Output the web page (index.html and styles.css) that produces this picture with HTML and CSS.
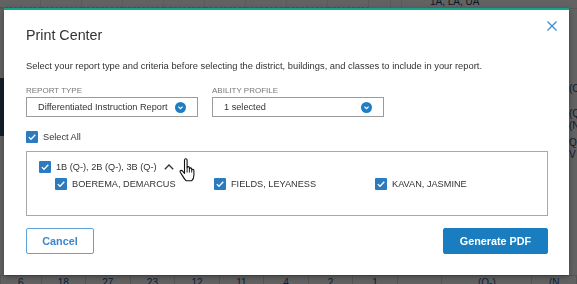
FILE: index.html
```html
<!DOCTYPE html>
<html lang="en">
<head>
    <meta charset="UTF-8">
    <meta name="viewport" content="width=device-width, initial-scale=1.0">
    <title>Print Center</title>

    <link rel="stylesheet" href="styles.css">

</head>
<body>
    <!-- page behind the dialog -->
    <div class="page">
        <div class="page-top">
            <span class="cell"></span>
            <span class="cell"></span>
            <span class="cell"></span>
            <span class="cell"></span>
            <span class="cell"></span>
            <span class="cell"></span>
            <span class="cell"></span>
            <span class="cell"></span>
            <span class="cell"></span>
            <span class="cell narrow"></span>
            <span class="cell thin"></span>
            <span class="top-note">1A, LA, UA</span>
        </div>
        <div class="page-mid">
            <div class="side-nav"></div>
            <div class="side-notes">
                <span class="n1">(C</span>
                <span class="n2">(Q</span>
                <span>(N</span>
                <span class="n4">Q</span>
                <span>V</span>
            </div>
        </div>
        <div class="page-bottom">
            <span class="num">6</span>
            <span class="num">18</span>
            <span class="num">27</span>
            <span class="num">23</span>
            <span class="num">12</span>
            <span class="num">11</span>
            <span class="num">4</span>
            <span class="num">2</span>
            <span class="num">1</span>
            <span class="num"></span>
            <span class="num wide">(Q-)</span>
            <span class="num">(N</span>
        </div>
    </div>

    <div class="overlay">
        <div class="modal">
            <button class="close" aria-label="Close">
                <svg width="10" height="10" viewBox="0 0 10 10"><path d="M0.5 0.5L9.5 9.5M9.5 0.5L0.5 9.5" stroke="#3d8fd1" stroke-width="1.3" fill="none"/></svg>
            </button>

            <h2 class="modal-title">Print Center</h2>
            <p class="intro">Select your report type and criteria before selecting the district, buildings, and classes to include in your report.</p>

            <div class="filters">
                <div class="filter">
                    <label class="filter-label">REPORT TYPE</label>
                    <div class="select">
                        <span>Differentiated Instruction Report</span>
                        <svg class="chev" width="11" height="11" viewBox="0 0 11 11"><circle cx="5.5" cy="5.5" r="5.5" fill="#1f7dc4"/><path d="M3.4 4.6L5.5 6.6L7.6 4.6" stroke="#fff" stroke-width="1.3" fill="none"/></svg>
                    </div>
                </div>
                <div class="filter">
                    <label class="filter-label">ABILITY PROFILE</label>
                    <div class="select">
                        <span>1 selected</span>
                        <svg class="chev" width="11" height="11" viewBox="0 0 11 11"><circle cx="5.5" cy="5.5" r="5.5" fill="#1f7dc4"/><path d="M3.4 4.6L5.5 6.6L7.6 4.6" stroke="#fff" stroke-width="1.3" fill="none"/></svg>
                    </div>
                </div>
            </div>

            <div class="check select-all">
                <span class="box"><svg width="12" height="12" viewBox="0 0 12 12"><path d="M2.8 6.1L5 8.3L9.3 3.7" stroke="#fff" stroke-width="1.3" fill="none"/></svg></span>
                <span>Select All</span>
            </div>

            <div class="class-list">
                <div class="check group-row">
                    <span class="box"><svg width="12" height="12" viewBox="0 0 12 12"><path d="M2.8 6.1L5 8.3L9.3 3.7" stroke="#fff" stroke-width="1.3" fill="none"/></svg></span>
                    <span>1B (Q-), 2B (Q-), 3B (Q-)</span>
                    <svg class="caret" width="10" height="6" viewBox="0 0 10 6"><path d="M0.8 5.3L5 1L9.2 5.3" stroke="#333" stroke-width="1.3" fill="none"/></svg>
                    <svg class="cursor" width="17" height="24" viewBox="0 0 17 24">
                        <path d="M5.5 2.2Q5.5 0.8 6.8 0.8Q8.1 0.8 8.1 2.2V9.6Q8.2 8.6 9.3 8.6Q10.4 8.6 10.4 9.8V10.8Q10.6 9.9 11.6 9.9Q12.7 9.9 12.7 11V12Q12.9 11.2 13.8 11.2Q14.9 11.2 14.9 12.4V17.2Q14.9 20.6 12.6 22.8H7.2Q5.6 21.4 3.4 17.6L1.3 14.2Q0.7 13 1.7 12.5Q2.7 12 3.6 13.2L5.5 15.4Z" fill="#fff" stroke="#111" stroke-width="1.1" stroke-linejoin="round"/>
                        <path d="M10.4 10.8V14.6M12.7 12V14.6M8.1 9.6V14.6" stroke="#111" stroke-width="0.9" fill="none"/>
                    </svg>
                </div>
                <div class="students">
                    <div class="check">
                        <span class="box"><svg width="12" height="12" viewBox="0 0 12 12"><path d="M2.8 6.1L5 8.3L9.3 3.7" stroke="#fff" stroke-width="1.3" fill="none"/></svg></span>
                        <span>BOEREMA, DEMARCUS</span>
                    </div>
                    <div class="check">
                        <span class="box"><svg width="12" height="12" viewBox="0 0 12 12"><path d="M2.8 6.1L5 8.3L9.3 3.7" stroke="#fff" stroke-width="1.3" fill="none"/></svg></span>
                        <span>FIELDS, LEYANESS</span>
                    </div>
                    <div class="check">
                        <span class="box"><svg width="12" height="12" viewBox="0 0 12 12"><path d="M2.8 6.1L5 8.3L9.3 3.7" stroke="#fff" stroke-width="1.3" fill="none"/></svg></span>
                        <span>KAVAN, JASMINE</span>
                    </div>
                </div>
            </div>

            <div class="actions">
                <button class="btn btn-cancel">Cancel</button>
                <button class="btn btn-primary">Generate PDF</button>
            </div>
        </div>
    </div>
</body>
</html>
```

FILE: styles.css
```css
html, body {
    margin: 0;
    height: 100%;
}
body {
    font-family: "Liberation Sans", Arial, sans-serif;
    color: #333;
    background: #f4f4f4;
    overflow: hidden;
}

/* page behind */
.page {
    height: 100%;
    display: flex;
    flex-direction: column;
}
.page-top {
    height: 8px;
    display: flex;
    border-bottom: 1px solid #ddd;
}
.cell {
    width: 40px;
    border-right: 1px solid #e2e2e2;
    border-bottom: 1px dashed #cfcfcf;
}
.cell.narrow {
    width: 21px;
    border-bottom: none;
}
.cell.thin {
    width: 10px;
    border-bottom: none;
}
.top-note {
    padding-left: 28px;
    font-size: 10px;
    line-height: 4px;
    color: #243b5e;
}
.page-mid {
    flex: 1;
    display: flex;
    justify-content: space-between;
}
.side-nav {
    width: 4px;
    height: 58px;
    margin-top: 69px;
    background: #2f4a6b;
}
.side-notes {
    width: 8px;
    display: flex;
    flex-direction: column;
    font-size: 10px;
    color: #2a4a78;
    padding-top: 74px;
}
.side-notes span {
    line-height: 12px;
}
.side-notes .n2 {
    margin-top: 13px;
}
.side-notes .n4 {
    margin-top: 5px;
}
.page-bottom {
    height: 8px;
    display: flex;
    border-top: 1px solid #ccc;
}
.num {
    width: 44px;
    border-right: 1px solid #d4d4d4;
    text-align: center;
    font-size: 10px;
    line-height: 13px;
    color: #1e4f8d;
    overflow: hidden;
}
.num:first-child {
    width: 40px;
    border-left: 1px solid #d4d4d4;
}
.num.wide {
    width: 90px;
}

/* dialog */
.overlay {
    position: fixed;
    inset: 0;
    background: rgba(0, 0, 0, 0.6);
    padding: 8px 0 0 4px;
}
.modal {
    position: relative;
    box-sizing: border-box;
    width: 565px;
    background: #fff;
    border-top: 2px solid #16a38b;
    padding: 17px 21px 21px 22px;
    box-shadow: 0 2px 6px rgba(0, 0, 0, 0.35);
}
.close {
    position: absolute;
    top: 11px;
    right: 12px;
    padding: 0;
    border: none;
    background: none;
    line-height: 0;
}
.modal-title {
    margin: 0;
    font-size: 14.3px;
    line-height: 16px;
    font-weight: normal;
    color: #333;
}
.intro {
    margin: 17px 0 0;
    font-size: 9.35px;
    line-height: 12px;
}

.filters {
    display: flex;
    gap: 14px;
    margin-top: 14px;
}
.filter-label {
    display: block;
    font-size: 8px;
    line-height: 10px;
    color: #777;
}
.select {
    box-sizing: border-box;
    width: 172px;
    height: 20px;
    margin-top: 1px;
    border: 1px solid #9b9b9b;
    padding: 0 11px 0 11px;
    display: flex;
    align-items: center;
    justify-content: space-between;
    font-size: 9.2px;
}

.check {
    display: flex;
    align-items: center;
    font-size: 9.2px;
    line-height: 12px;
}
.box {
    width: 12px;
    height: 12px;
    margin-right: 5px;
    border-radius: 1px;
    background: #2b7bc0;
    line-height: 0;
    flex-shrink: 0;
}
.select-all {
    margin-top: 14px;
}

.class-list {
    margin-top: 8px;
    border: 1px solid #a8a8a8;
    padding: 9px 12px 25px;
}
.group-row {
    position: relative;
}
.caret {
    margin-left: 7px;
}
.cursor {
    position: absolute;
    left: 140px;
    top: -3px;
}
.students {
    display: grid;
    grid-template-columns: 159px 161px 1fr;
    margin: 5px 0 0 16px;
}

.actions {
    display: flex;
    justify-content: space-between;
    margin-top: 12px;
}
.btn {
    box-sizing: border-box;
    height: 26px;
    font-family: "Liberation Sans", Arial, sans-serif;
    font-size: 10.8px;
    font-weight: bold;
    border-radius: 2px;
    cursor: pointer;
}
.btn-cancel {
    width: 68px;
    border: 1px solid #5fa2d8;
    background: #fff;
    color: #3a87cc;
}
.btn-primary {
    width: 105px;
    border: 1px solid #1a7dc0;
    background: #1a7dc0;
    color: #fff;
}
```
